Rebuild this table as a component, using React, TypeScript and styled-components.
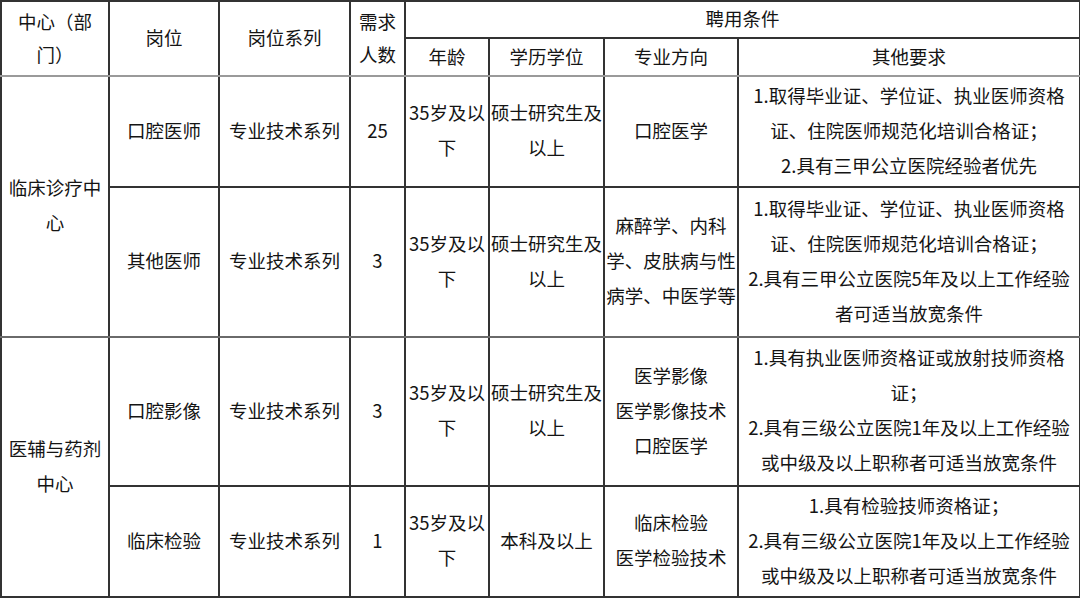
import React from "react";
import styled, { createGlobalStyle } from "styled-components";

type Job = {
  center?: { name: string[]; span: number };
  post: string;
  series: string;
  count: string;
  age: string[];
  degree: string[];
  major: string[];
  other: string[];
  height: number;
  bottom?: "dark" | "gray";
};

const jobs: Job[] = [
  {
    center: { name: ["临床诊疗中", "心"], span: 2 },
    post: "口腔医师",
    series: "专业技术系列",
    count: "25",
    age: ["35岁及以", "下"],
    degree: ["硕士研究生及", "以上"],
    major: ["口腔医学"],
    other: [
      "1.取得毕业证、学位证、执业医师资格",
      "证、住院医师规范化培训合格证；",
      "2.具有三甲公立医院经验者优先",
    ],
    height: 111,
  },
  {
    post: "其他医师",
    series: "专业技术系列",
    count: "3",
    age: ["35岁及以", "下"],
    degree: ["硕士研究生及", "以上"],
    major: ["麻醉学、内科", "学、皮肤病与性", "病学、中医学等"],
    other: [
      "1.取得毕业证、学位证、执业医师资格",
      "证、住院医师规范化培训合格证；",
      "2.具有三甲公立医院5年及以上工作经验",
      "者可适当放宽条件",
    ],
    height: 150,
    bottom: "gray",
  },
  {
    center: { name: ["医辅与药剂", "中心"], span: 2 },
    post: "口腔影像",
    series: "专业技术系列",
    count: "3",
    age: ["35岁及以", "下"],
    degree: ["硕士研究生及", "以上"],
    major: ["医学影像", "医学影像技术", "口腔医学"],
    other: [
      "1.具有执业医师资格证或放射技师资格",
      "证；",
      "2.具有三级公立医院1年及以上工作经验",
      "或中级及以上职称者可适当放宽条件",
    ],
    height: 149,
  },
  {
    post: "临床检验",
    series: "专业技术系列",
    count: "1",
    age: ["35岁及以", "下"],
    degree: ["本科及以上"],
    major: ["临床检验", "医学检验技术"],
    other: [
      "1.具有检验技师资格证；",
      "2.具有三级公立医院1年及以上工作经验",
      "或中级及以上职称者可适当放宽条件",
    ],
    height: 111,
  },
];

const widths = [108, 110, 131, 55, 84, 115, 134, 342];

const GlobalStyle = createGlobalStyle`
  html, body {
    margin: 0;
    padding: 0;
    background: #ffffff;
  }
  body {
    font-family: "Noto Sans CJK SC", "Noto Sans", sans-serif;
    color: #141414;
  }
`;

const Sheet = styled.table`
  width: 1079px;
  border-collapse: collapse;
  table-layout: fixed;
  font-size: 18.5px;
  border-top: 2px solid #2e2e2e;
  border-right: 2px solid #2a2a2a;
`;

const Row = styled.tr<{ $h: number }>`
  height: ${(p) => p.$h}px;
`;

const Cell = styled.td<{ $tone?: "gray"; $bottom?: "dark" | "gray" }>`
  border: 2px solid #333333;
  border-left-color: ${(p) => (p.$tone === "gray" ? "#8c8c8c" : "#333333")};
  border-bottom-color: ${(p) => (p.$bottom === "gray" ? "#6a6a6a" : "#333333")};
  padding: 0 1px 3px;
  text-align: center;
  vertical-align: middle;
  line-height: 35px;
  white-space: nowrap;
`;

const HeadCell = styled(Cell)<{ $under?: boolean }>`
  line-height: 33px;
  padding-bottom: 2px;
  border-bottom-color: ${(p) => (p.$under ? "#9a9a9a" : "#333333")};
`;

const Line = styled.div`
  display: block;
`;

const Lines: React.FC<{ items: string[] }> = ({ items }) => (
  <>
    {items.map((t, i) => (
      <Line key={i}>{t}</Line>
    ))}
  </>
);

const App: React.FC = () => {
  return (
    <>
      <GlobalStyle />
      <Sheet>
        <colgroup>
          {widths.map((w, i) => (
            <col key={i} style={{ width: w }} />
          ))}
        </colgroup>
        <thead>
          <Row $h={37}>
            <HeadCell rowSpan={2} $under>
              <Lines items={["中心（部", "门）"]} />
            </HeadCell>
            <HeadCell rowSpan={2} $under $tone="gray">
              岗位
            </HeadCell>
            <HeadCell rowSpan={2} $under>
              岗位系列
            </HeadCell>
            <HeadCell rowSpan={2} $under>
              <Lines items={["需求", "人数"]} />
            </HeadCell>
            <HeadCell colSpan={4}>聘用条件</HeadCell>
          </Row>
          <Row $h={38}>
            <HeadCell $under>年龄</HeadCell>
            <HeadCell $under>学历学位</HeadCell>
            <HeadCell $under>专业方向</HeadCell>
            <HeadCell $under>其他要求</HeadCell>
          </Row>
        </thead>
        <tbody>
          {jobs.map((job, i) => (
            <Row key={i} $h={job.height}>
              {job.center && (
                <Cell rowSpan={job.center.span} $bottom={i === 0 ? "gray" : "dark"}>
                  <Lines items={job.center.name} />
                </Cell>
              )}
              <Cell $tone="gray" $bottom={job.bottom}>
                {job.post}
              </Cell>
              <Cell $bottom={job.bottom}>{job.series}</Cell>
              <Cell $bottom={job.bottom}>{job.count}</Cell>
              <Cell $bottom={job.bottom}>
                <Lines items={job.age} />
              </Cell>
              <Cell $bottom={job.bottom}>
                <Lines items={job.degree} />
              </Cell>
              <Cell $bottom={job.bottom}>
                <Lines items={job.major} />
              </Cell>
              <Cell $bottom={job.bottom}>
                <Lines items={job.other} />
              </Cell>
            </Row>
          ))}
        </tbody>
      </Sheet>
    </>
  );
};

export default App;
